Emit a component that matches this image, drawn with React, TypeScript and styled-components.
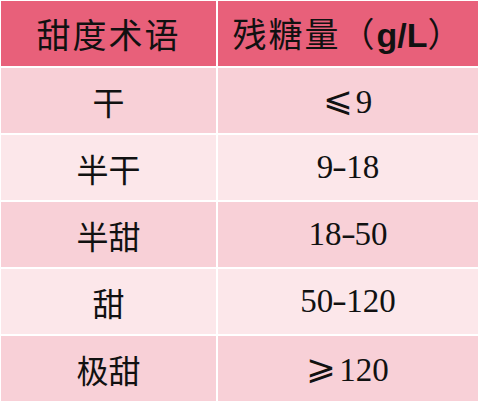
import React from 'react';
import styled, { createGlobalStyle } from 'styled-components';

const GlobalStyle = createGlobalStyle`
  html, body {
    margin: 0;
    padding: 0;
    background: #ffffff;
  }
`;

const Table = styled.div`
  display: grid;
  grid-template-columns: 215px 260px;
  grid-auto-rows: 65px;
  gap: 2px;
  padding: 1px 3px 1px 1px;
  width: max-content;
  background: #ffffff;
`;

const Cell = styled.div<{ $tone: 'head' | 'odd' | 'even' }>`
  display: flex;
  align-items: center;
  justify-content: center;
  background: ${({ $tone }) =>
    $tone === 'head' ? '#e8607a' : $tone === 'odd' ? '#f8d0d7' : '#fce7ea'};
  color: #111111;
`;

const HeadText = styled.span`
  font-family: 'Noto Sans CJK SC', sans-serif;
  font-size: 34px;
  letter-spacing: 2px;
  line-height: 1;
`;

const Unit = styled.b`
  font-family: 'Liberation Sans', Arial, sans-serif;
  font-weight: 700;
  letter-spacing: 0;
`;

const Term = styled.span`
  font-family: 'Noto Sans CJK SC', sans-serif;
  font-size: 32px;
  line-height: 1;
`;

const Value = styled.span`
  font-family: 'Liberation Serif', 'DejaVu Serif', serif;
  font-size: 33px;
  line-height: 1;
  white-space: nowrap;
`;

const Sign = styled.span`
  display: inline-block;
  font-family: 'DejaVu Sans ExtraLight', 'DejaVu Sans', sans-serif;
  font-weight: 200;
  font-size: 34px;
  margin-right: 4px;
  vertical-align: 2px;
  transform: scaleX(1.05);
`;

const Dash = styled.span`
  display: inline-block;
  transform: scaleX(1.35);
  margin: 0 1px;
`;

const renderValue = (value: string) => {
  if (value.startsWith('⩽') || value.startsWith('⩾')) {
    return (
      <>
        <Sign>{value[0]}</Sign>
        {value.slice(1)}
      </>
    );
  }
  const [from, to] = value.split('-');
  return (
    <>
      {from}
      <Dash>-</Dash>
      {to}
    </>
  );
};

const rows = [
  { term: '干', value: '⩽9' },
  { term: '半干', value: '9-18' },
  { term: '半甜', value: '18-50' },
  { term: '甜', value: '50-120' },
  { term: '极甜', value: '⩾120' },
];

const App: React.FC = () => {
  return (
    <>
      <GlobalStyle />
      <Table>
        <Cell $tone="head">
          <HeadText>甜度术语</HeadText>
        </Cell>
        <Cell $tone="head">
          <HeadText>
            残糖量（<Unit>g/L</Unit>）
          </HeadText>
        </Cell>
        {rows.map((row, i) => {
          const tone = i % 2 === 0 ? 'odd' : 'even';
          return (
            <React.Fragment key={row.term}>
              <Cell $tone={tone}>
                <Term>{row.term}</Term>
              </Cell>
              <Cell $tone={tone}>
                <Value>{renderValue(row.value)}</Value>
              </Cell>
            </React.Fragment>
          );
        })}
      </Table>
    </>
  );
};

export default App;
